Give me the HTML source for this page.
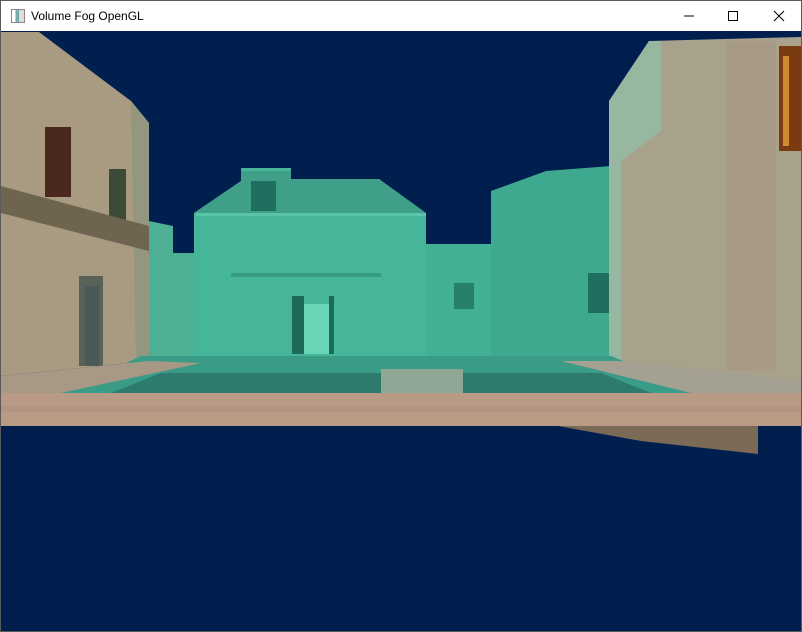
<!DOCTYPE html>
<html><head><style>
html,body{margin:0;padding:0;width:802px;height:632px;overflow:hidden;background:#fff}
.win{position:absolute;left:0;top:0;width:800px;height:630px;border:1px solid #5a5a5a;background:#001f4f}
.tb{position:absolute;left:0;top:0;width:800px;height:30px;background:#fff;font-family:"Liberation Sans",sans-serif;font-size:12px;color:#000}
.tb .t{position:absolute;left:30px;top:8px}
.ic{position:absolute;left:10px;top:8px;width:12px;height:12px;border:1px solid #888;background:linear-gradient(90deg,#fff 0 30%,#7aa 30% 60%,#ddd 60%)}
</style></head><body>
<div class="win">
<div class="tb"><div class="ic"></div><span class="t">Volume Fog OpenGL</span>
<svg style="position:absolute;left:670px;top:0" width="130" height="30">
<line x1="13" y1="15" x2="23" y2="15" stroke="#000"/>
<rect x="57.5" y="10.5" width="9" height="9" fill="none" stroke="#000"/>
<path d="M103 10 L113 20 M113 10 L103 20" stroke="#000"/>
</svg></div>
<svg style="position:absolute;left:0;top:30px" width="800" height="600" viewBox="0 30 800 600">
<polygon points="490,190 545,170 610,165 620,355 490,355" fill="#3fa98f"/>
<polygon points="425,243 490,243 490,355 425,355" fill="#42b095"/>
<polygon points="148,220 172,225 172,252 193,252 193,355 148,355" fill="#4db095"/>
<polygon points="193,212 240,180 240,167 290,167 290,178 378,178 425,212 425,355 193,355" fill="#45b699"/>
<polygon points="193,212 240,180 240,170 290,170 290,178 378,178 425,212" fill="#3f9f88"/>
<rect x="250" y="180" width="25" height="30" fill="#1f6f60"/>
<rect x="195" y="212" width="230" height="3" fill="#5ac4a8"/>
<rect x="230" y="272" width="150" height="4" fill="#379c84"/>
<rect x="291" y="295" width="12" height="58" fill="#1e6a5a"/>
<rect x="303" y="303" width="25" height="50" fill="#6ad6b8"/>
<rect x="328" y="295" width="5" height="58" fill="#1e6a5a"/>
<rect x="453" y="282" width="20" height="26" fill="#26806c"/>
<rect x="587" y="272" width="26" height="40" fill="#1e6f5f"/>
<polygon points="608,100 648,40 800,36 800,380 720,380 608,360" fill="#a8a28c"/>
<polygon points="608,100 648,40 660,40 660,130 620,160 620,360 608,360" fill="#97b7a0"/>
<rect x="725" y="40" width="50" height="330" fill="#a89b86"/>
<rect x="778" y="45" width="22" height="105" fill="#7a3a12"/>
<rect x="782" y="55" width="6" height="90" fill="#d08a30"/>
<polygon points="0,31 38,31 130,100 148,122 148,360 0,375" fill="#a89b82"/>
<polygon points="130,100 148,122 148,360 135,362" fill="#93977f"/>
<rect x="44" y="126" width="26" height="70" fill="#4a2820"/>
<rect x="108" y="168" width="17" height="55" fill="#3d4a38"/>
<polygon points="0,185 148,225 148,250 0,212" fill="#6e6450"/>
<rect x="78" y="275" width="24" height="90" fill="#5a6258"/>
<rect x="84" y="285" width="14" height="80" fill="#4b5a58"/>
<polygon points="140,355 610,355 700,392 60,392" fill="#3a9c86"/>
<polygon points="160,372 600,372 650,392 110,392" fill="#2d7b6c"/>
<polygon points="0,375 148,360 200,362 60,392 0,392" fill="#a89886"/>
<polygon points="560,360 620,360 800,380 800,392 690,392" fill="#a4a092"/>
<rect x="380" y="368" width="82" height="24" fill="#8fa896"/>
<rect x="0" y="392" width="800" height="33" fill="#b99a85"/>
<rect x="0" y="405" width="800" height="6" fill="#b09080" opacity=".6"/>
<polygon points="557,425 757,425 757,453 640,440" fill="#7b6a55"/>
</svg>
</div>
</body></html>
